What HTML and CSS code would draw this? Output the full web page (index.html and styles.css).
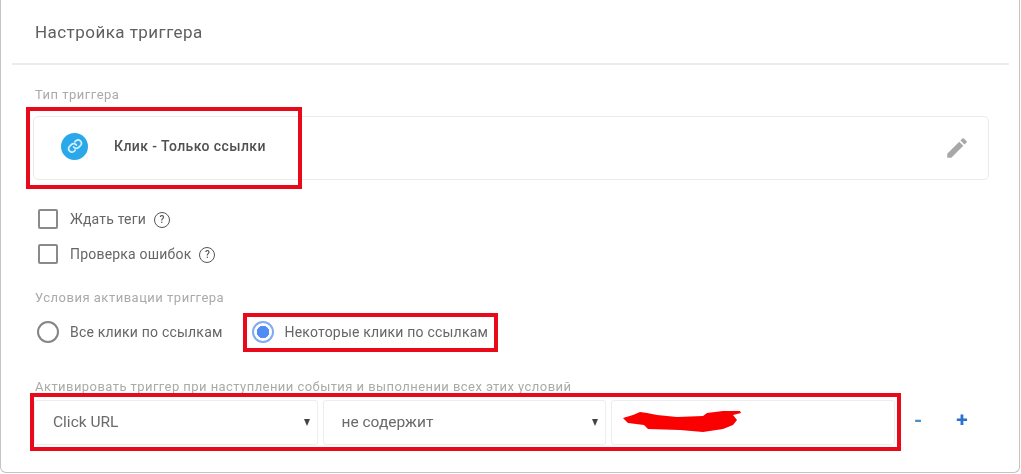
FILE: index.html
```html
<!DOCTYPE html>
<html>
<head>
  <meta charset="UTF-8">
  <title>Настройка триггера</title>
  <link rel="stylesheet" href="styles.css">
</head>
<body>
  <div class="card">
    <h2 class="card-title">Настройка триггера</h2>
    <div class="card-body">
      <p class="field-label label-type">Тип триггера</p>
      <div class="type-box">
        <span class="type-icon">
          <svg width="16" height="16" viewBox="0 0 24 24" fill="none" stroke="#d6eefb" stroke-width="2.6" stroke-linecap="round" stroke-linejoin="round">
            <path d="M10 13.5a5 5 0 0 0 7.5.5l3-3a5 5 0 0 0-7-7l-1.7 1.7"/>
            <path d="M14 10.5a5 5 0 0 0-7.5-.5l-3 3a5 5 0 0 0 7 7l1.7-1.7"/>
          </svg>
        </span>
        <span class="type-name">Клик - Только ссылки</span>
        <svg class="edit-icon" width="26" height="26" viewBox="0 0 24 24" fill="#a8a8a8">
          <path d="M3 17.25V21h3.75L17.81 9.94l-3.75-3.75L3 17.25zM20.71 7.04a1 1 0 0 0 0-1.41l-2.34-2.34a1 1 0 0 0-1.41 0l-1.83 1.83 3.75 3.75 1.83-1.83z"/>
        </svg>
      </div>

      <!-- Options -->
      <div class="check-row first">
        <span class="checkbox"></span>
        <span class="option-text">Ждать теги</span>
        <span class="help-icon">?</span>
      </div>
      <div class="check-row">
        <span class="checkbox"></span>
        <span class="option-text">Проверка ошибок</span>
        <span class="help-icon">?</span>
      </div>

      <p class="field-label label-fire">Условия активации триггера</p>
      <div class="radio-row">
        <span class="radio"></span>
        <span class="option-text">Все клики по ссылкам</span>
        <span class="radio radio-on"></span>
        <span class="option-text">Некоторые клики по ссылкам</span>
      </div>

      <p class="field-label label-cond">Активировать триггер при наступлении события и выполнении всех этих условий</p>
      <div class="condition-row">
        <div class="select-box">Click URL<span class="arrow"></span></div>
        <div class="select-box">не содержит<span class="arrow"></span></div>
        <div class="value-box"></div>
        <span class="row-btn minus">-</span>
        <span class="row-btn plus">+</span>
      </div>
    </div>

    <!-- Red annotation frames -->
    <div class="mark mark-type"></div>
    <div class="mark mark-radio"></div>
    <div class="mark mark-cond"></div>
    <svg class="scribble" width="120" height="24" viewBox="0 0 120 24" fill="#fb0000">
      <path d="M1 8 L11 5 L18 2 L25 3 L35 5 L55 7 L81 6 L85 3 L101 1 L118 1 L119 3 L111 5 L115 10 L111 15 L101 19 L81 22 L58 20 L26 19 L22 15 L6 13 Z"/>
    </svg>
  </div>
</body>
</html>
```

FILE: styles.css
```css
body {
  margin: 0;
  background-color: #fff;
  font-family: Roboto, "Noto Sans", sans-serif;
}
.card {
  position: relative;
  box-sizing: border-box;
  width: 1020px;
  height: 473px;
  border: 1px solid #c4c4c4;
  border-top: none;
  border-radius: 0 0 6px 6px;
  background-color: #fff;
  filter: blur(0.6px);
}
.card-title {
  margin: 0 10px 0 11px;
  padding: 22px 0 0 23px;
  height: 41px;
  border-bottom: 2px solid #ececec;
  font-size: 17px;
  line-height: 20px;
  font-weight: 400;
  color: #5f5f5f;
  letter-spacing: 0.45px;
}
.card-body {
  padding: 0 0 0 32px;
}
.field-label {
  margin: 0;
  padding-left: 2px;
  font-size: 13px;
  line-height: 14px;
  color: #aaa;
  letter-spacing: 0.5px;
}
.label-type {
  padding-top: 23px;
}
.label-fire {
  padding-top: 27px;
}
.label-cond {
  padding-top: 37px;
  letter-spacing: 0.44px;
}
.type-box {
  display: flex;
  align-items: center;
  box-sizing: border-box;
  width: 956px;
  height: 64px;
  margin-top: 14px;
  padding: 0 18px 4px 27px;
  border: 1px solid #ebebeb;
  border-radius: 5px;
}
.type-icon {
  display: flex;
  align-items: center;
  justify-content: center;
  width: 27px;
  height: 27px;
  border-radius: 50%;
  background-color: #2aa9ea;
}
.type-name {
  margin-left: 26px;
  font-size: 14px;
  font-weight: 500;
  color: #505050;
  letter-spacing: 0.4px;
}
.edit-icon {
  margin-left: auto;
  margin-top: 4px;
}
.check-row {
  display: flex;
  align-items: center;
  height: 20px;
  margin-top: 15px;
  padding-left: 5px;
}
.check-row.first {
  margin-top: 29px;
}
.checkbox {
  box-sizing: border-box;
  width: 20px;
  height: 20px;
  margin-right: 12px;
  border: 2px solid #8a8a8a;
  border-radius: 2px;
}
.option-text {
  font-size: 14px;
  color: #666;
  letter-spacing: 0.2px;
}
.help-icon {
  box-sizing: border-box;
  width: 16px;
  height: 16px;
  margin: 1px 0 0 8px;
  border: 1.6px solid #555;
  border-radius: 50%;
  font-size: 10px;
  font-weight: 500;
  line-height: 13px;
  text-align: center;
  color: #555;
}
.radio-row {
  display: flex;
  align-items: center;
  height: 22px;
  margin-top: 16px;
  padding-left: 4px;
}
.radio {
  box-sizing: border-box;
  width: 22px;
  height: 22px;
  margin-right: 11px;
  border: 2px solid #858585;
  border-radius: 50%;
}
.radio-on {
  margin-left: 29px;
  border-color: #7fabf2;
  background: radial-gradient(circle, #4f8df5 0 6px, #fff 6.5px);
}
.condition-row {
  display: flex;
  align-items: center;
  height: 45px;
  margin-top: 6px;
  padding-left: 1px;
}
.select-box {
  position: relative;
  box-sizing: border-box;
  width: 283.5px;
  height: 45px;
  margin-right: 5px;
  padding-left: 18px;
  border: 1px solid #ededed;
  border-radius: 3px;
  font-size: 15.5px;
  line-height: 43px;
  color: #6a6a6a;
}
.arrow {
  position: absolute;
  top: 18px;
  right: 7px;
  border-left: 3.5px solid transparent;
  border-right: 3.5px solid transparent;
  border-top: 7px solid #444;
}
.value-box {
  box-sizing: border-box;
  width: 284px;
  height: 45px;
  border: 1px solid #ededed;
  border-radius: 3px;
}
.row-btn {
  font-size: 21px;
  font-weight: 700;
  line-height: 20px;
  margin-top: -5px;
}
.minus {
  margin-left: 19px;
  color: #4a90c8;
}
.plus {
  margin-left: 34px;
  color: #2a72d0;
}
/* Annotations drawn over the form */
.mark {
  position: absolute;
  box-sizing: border-box;
  border: 4px solid #e8091a;
}
.mark-type {
  left: 25px;
  top: 107px;
  width: 276px;
  height: 82px;
}
.mark-radio {
  left: 242px;
  top: 313px;
  width: 255px;
  height: 39px;
}
.mark-cond {
  left: 29px;
  top: 393px;
  width: 871px;
  height: 58px;
}
.scribble {
  position: absolute;
  left: 621px;
  top: 410px;
}
```
